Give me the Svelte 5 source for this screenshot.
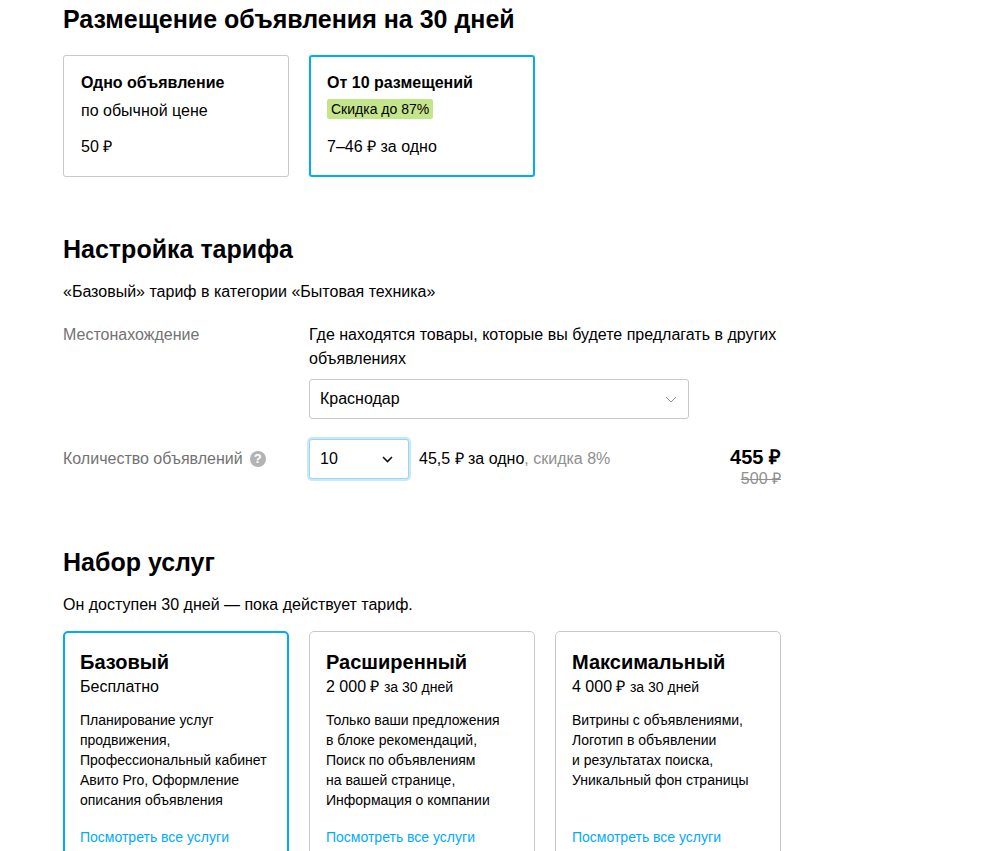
<script>
    const placements = [
        { title: 'Одно объявление', note: 'по обычной цене', price: '50 ₽', active: false },
        { title: 'От 10 размещений', badge: 'Скидка до 87%', price: '7–46 ₽ за одно', active: true }
    ];

    const plans = [
        {
            name: 'Базовый',
            free: true,
            lines: ['Планирование услуг', 'продвижения,', 'Профессиональный кабинет', 'Авито Pro, Оформление', 'описания объявления'],
            active: true
        },
        {
            name: 'Расширенный',
            price: '2 000 ₽',
            lines: ['Только ваши предложения', 'в блоке рекомендаций,', 'Поиск по объявлениям', 'на вашей странице,', 'Информация о компании'],
            active: false
        },
        {
            name: 'Максимальный',
            price: '4 000 ₽',
            lines: ['Витрины с объявлениями,', 'Логотип в объявлении', 'и результатах поиска,', 'Уникальный фон страницы'],
            active: false
        }
    ];
</script>

<div class="page">
    <h2 class="first">Размещение объявления на 30 дней</h2>
    <div class="cards">
        {#each placements as item}
            <div class="card placement" class:active={item.active}>
                <div class="placement-title">{item.title}</div>
                {#if item.badge}
                    <div class="badge-row"><span class="badge">{item.badge}</span></div>
                {:else}
                    <div class="note">{item.note}</div>
                {/if}
                <div class="placement-price">{item.price}</div>
            </div>
        {/each}
    </div>

    <h2 class="second">Настройка тарифа</h2>
    <p class="lead">«Базовый» тариф в категории «Бытовая техника»</p>

    <div class="form-row location">
        <div class="label">Местонахождение</div>
        <div class="field">
            <div class="hint">Где находятся товары, которые вы будете предлагать в других объявлениях</div>
            <div class="select city">
                <span>Краснодар</span>
                <svg width="12" height="7" viewBox="0 0 12 7"><path d="M1 1l5 5 5-5" fill="none" stroke="#8f8f8f" stroke-width="1"/></svg>
            </div>
        </div>
    </div>

    <div class="form-row amount">
        <div class="label">
            Количество объявлений
            <span class="help">?</span>
        </div>
        <div class="select count">
            <span>10</span>
            <svg width="11" height="7" viewBox="0 0 11 7"><path d="M1 1l4.500 4.500L10 1" fill="none" stroke="#111" stroke-width="1.600"/></svg>
        </div>
        <div class="per-item">45,5 ₽ за одно<span class="muted">, скидка 8%</span></div>
        <div class="total">
            <div class="total-new">455 ₽</div>
            <div class="total-old">500 ₽</div>
        </div>
    </div>

    <h2 class="third">Набор услуг</h2>
    <p class="lead">Он доступен 30 дней — пока действует тариф.</p>

    <div class="cards">
        {#each plans as plan}
            <div class="card plan" class:active={plan.active}>
                <div class="plan-name">{plan.name}</div>
                <div class="plan-price">
                    {#if plan.free}
                        Бесплатно
                    {:else}
                        {plan.price} <small>за 30 дней</small>
                    {/if}
                </div>
                <div class="plan-text">
                    {#each plan.lines as line}
                        <div>{line}</div>
                    {/each}
                </div>
                <a class="plan-link" href="#plans">Посмотреть все услуги</a>
            </div>
        {/each}
    </div>
</div>

<style>
    :global(body) {
        background: #fff;
    }
    .page {
        height: 851px;
        overflow: hidden;
        box-sizing: border-box;
        padding-left: 63px;
        width: 983px;
        font-family: "Liberation Sans", Arial, sans-serif;
        font-size: 16px;
        line-height: 24px;
        color: #000;
    }
    h2 {
        margin: 0;
        font-size: 25px;
        line-height: 32px;
        font-weight: 700;
    }
    .first {
        margin-top: 3px;
    }
    .second {
        margin-top: 56px;
    }
    .third {
        margin-top: 57px;
    }
    .cards {
        display: flex;
        gap: 20px;
    }
    .card {
        box-sizing: border-box;
        width: 226px;
        border: 1px solid #c9c9c9;
        border-radius: 3px;
    }
    .card.active {
        border: 2px solid #00aaff;
    }
    .placement {
        height: 122px;
        margin-top: 20px;
        padding: 15px 17px;
    }
    .placement.active {
        padding: 14px 16px;
    }
    .placement-title {
        font-weight: 700;
    }
    .note {
        margin-top: 4px;
        height: 25px;
    }
    .badge-row {
        margin-top: 2px;
        height: 27px;
    }
    .badge {
        display: inline-block;
        background: #c5e58b;
        border-radius: 2px;
        padding: 0 4px;
        font-size: 14px;
        line-height: 20px;
    }
    .placement-price {
        margin-top: 11px;
    }
    .lead {
        margin: 15px 0 0;
        font-size: 16px;
        line-height: 24px;
    }
    .form-row {
        display: flex;
        width: 718px;
    }
    .location {
        margin-top: 19px;
    }
    .label {
        width: 246px;
        flex: none;
        color: #737373;
    }
    .hint {
        width: 472px;
    }
    .select {
        box-sizing: border-box;
        display: flex;
        align-items: center;
        justify-content: space-between;
        height: 40px;
        border: 1px solid #c9c9c9;
        border-radius: 3px;
        background: #fff;
    }
    .city {
        width: 380px;
        margin-top: 8px;
        padding: 0 11px 0 10px;
    }
    .amount {
        margin-top: 20px;
    }
    .amount .label {
        display: flex;
        align-items: center;
        gap: 7px;
        height: 40px;
    }
    .help {
        width: 16px;
        height: 16px;
        border-radius: 50%;
        background: #b3b3b3;
        color: #fff;
        font-size: 13px;
        line-height: 16px;
        font-weight: 700;
        text-align: center;
    }
    .count {
        width: 100px;
        flex: none;
        padding: 0 15px 0 10px;
        border-color: #9fd3ee;
        box-shadow: 0 0 0 2px #c5e9fb;
    }
    .per-item {
        margin-left: 10px;
        line-height: 40px;
        font-size: 16px;
    }
    .muted {
        color: #8f8f8f;
    }
    .total {
        margin-left: auto;
        text-align: right;
    }
    .total-new {
        font-size: 20px;
        line-height: 24px;
        font-weight: 700;
        margin-top: 6px;
    }
    .total-old {
        color: #8f8f8f;
        line-height: 20px;
        text-decoration: line-through;
    }
    .plan {
        display: flex;
        flex-direction: column;
        height: 260px;
        margin-top: 14px;
        padding: 18px 16px;
        border-radius: 5px;
    }
    .plan.active {
        padding: 17px 15px;
    }
    .plan-name {
        font-size: 20px;
        line-height: 24px;
        font-weight: 700;
    }
    .plan-price {
        margin-top: 1px;
        line-height: 24px;
    }
    .plan-price small {
        font-size: 14px;
    }
    .plan-text {
        height: 100px;
        margin-top: 11px;
        font-size: 14px;
        line-height: 20px;
    }
    .plan-link {
        display: block;
        margin-top: 17px;
        font-size: 14px;
        line-height: 20px;
        color: #0af;
        text-decoration: none;
    }
</style>
